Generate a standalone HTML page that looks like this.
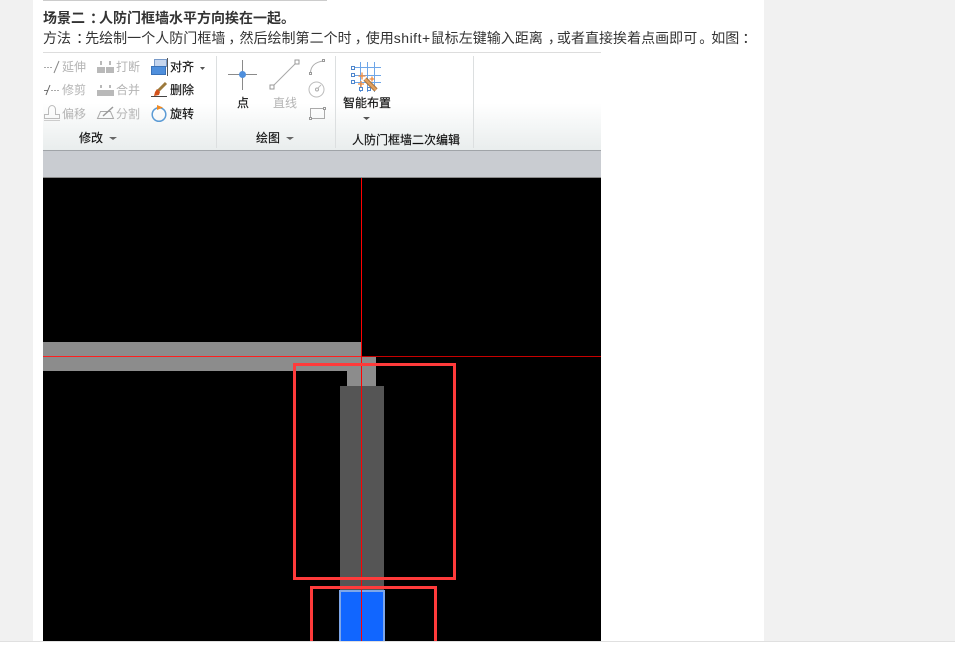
<!DOCTYPE html>
<html lang="zh"><head><meta charset="utf-8"><title>人防门框墙</title>
<style>
html,body{margin:0;padding:0;width:955px;height:650px;overflow:hidden;background:#fff}
body{position:relative;font-family:"Liberation Sans","Noto Sans CJK SC",sans-serif;color:#333}
.a{position:absolute}
.t{position:absolute;white-space:nowrap;font-size:12px;line-height:14px;color:#111;-webkit-text-stroke:.15px currentColor}
.g{color:#b4b4b4;-webkit-text-stroke:0}
.h{-webkit-text-stroke:0}
.p{position:relative;left:5px}
.c{position:relative;left:3px}
.e{position:relative;left:3px}
.q{position:relative;left:2px}
.l{letter-spacing:.5px}
</style></head><body>
<div class="a" style="left:0;top:0;width:33px;height:641px;background:#f1f1f1"></div>
<div class="a" style="left:764px;top:0;width:191px;height:641px;background:#f1f1f1"></div>
<div class="a" style="left:0;top:641px;width:955px;height:1px;background:#e0e0e0"></div>
<div class="a" style="left:43px;top:0;width:284px;height:1px;background:#ccc"></div>
<div class="t h" style="left:43px;top:9px;font-size:14px;line-height:18px;font-weight:bold;color:#333">场景二<span class="p">：</span>人防门框墙水平方向挨在一起。</div>
<div class="t h" style="left:43px;top:29px;font-size:14px;line-height:18px;color:#333;letter-spacing:.03px">方法<span class="p">：</span>先绘制一个人防门框墙<span class="c">，</span>然后绘制第二个时<span class="c">，</span>使用<span class="l">shift+</span>鼠标左键输入距离<span class="p">，</span>或者直接挨着点画即可<span class="q">。</span>如图<span class="e">：</span></div>
<div class="a" style="left:43px;top:52px;width:558px;height:1px;background:#ddd"></div>

<!-- ribbon -->
<div class="a" style="left:43px;top:53px;width:558px;height:97px;background:linear-gradient(#fff 0,#fff 50px,#e9eded 97px)"></div>
<div class="a" style="left:43px;top:150px;width:558px;height:1px;background:#a0a4a8"></div>
<div class="a" style="left:43px;top:151px;width:558px;height:26px;background:#c9ccd1"></div>
<div class="a" style="left:43px;top:177px;width:558px;height:1px;background:#8a8a8a"></div>
<div class="a" style="left:216px;top:56px;width:1px;height:92px;background:#dcdfe0"></div>
<div class="a" style="left:335px;top:56px;width:1px;height:92px;background:#dcdfe0"></div>
<div class="a" style="left:473px;top:56px;width:1px;height:92px;background:#dcdfe0"></div>

<div class="t g" style="left:62px;top:60px">延伸</div>
<div class="t g" style="left:62px;top:83px">修剪</div>
<div class="t g" style="left:62px;top:107px">偏移</div>
<div class="t g" style="left:116px;top:60px">打断</div>
<div class="t g" style="left:116px;top:83px">合并</div>
<div class="t g" style="left:116px;top:107px">分割</div>
<div class="t" style="left:170px;top:60px">对齐</div>
<div class="t" style="left:170px;top:83px">删除</div>
<div class="t" style="left:170px;top:107px">旋转</div>
<div class="t" style="left:79px;top:131px">修改</div>
<div class="t" style="left:237px;top:96px">点</div>
<div class="t g" style="left:273px;top:96px">直线</div>
<div class="t" style="left:256px;top:131px">绘图</div>
<div class="t" style="left:343px;top:96px">智能布置</div>
<div class="t" style="left:352px;top:133px">人防门框墙二次编辑</div>

<svg class="a" style="left:43px;top:53px" width="430" height="97" viewBox="43 53 430 97" fill="none">
 <!-- extend / trim / offset -->
 <path d="M44 67.500h9" stroke="#aaa" stroke-dasharray="2 1"/>
 <path d="M54 73l5-12" stroke="#888"/>
 <path d="M44 90.500h4" stroke="#777"/><path d="M46 95l4-10" stroke="#666"/><path d="M51 90.500h8" stroke="#aaa" stroke-dasharray="2 1"/>
 <path d="M44.500 118.500h15v-4h-4v-5a3.500 4 0 0 0-7 0v5h-4z" stroke="#bbb"/><path d="M44 120.500h16" stroke="#ccc"/>
 <!-- break / join / split -->
 <g fill="#b9b9b9"><rect x="97" y="67" width="8" height="6"/><rect x="106" y="67" width="8" height="6"/><rect x="100" y="61" width="2" height="4"/><rect x="109" y="61" width="2" height="4"/>
 <rect x="97" y="90" width="17" height="6"/><rect x="100" y="85" width="2" height="3"/><rect x="109" y="85" width="2" height="3"/></g>
 <path d="M97.500 118.500l3-7h10l3 7z" stroke="#aaa"/><path d="M103 116l10-9" stroke="#999" stroke-width="1.500"/>
 <!-- align -->
 <rect x="154.500" y="59.500" width="12" height="7" fill="#c6d6ee" stroke="#7a9bc9"/><rect x="151.500" y="66.500" width="14" height="8" fill="#4f8fdc" stroke="#3a72b8"/><path d="M167.500 58v18" stroke="#555"/>
 <path d="M200 67h5l-2.500 3z" fill="#555"/>
 <!-- brush -->
 <path d="M158 91l8-8" stroke="#9c7a3c" stroke-width="3"/><path d="M157 89l3 3-1 3-5 1 1-4z" fill="#d2521c"/><path d="M151 96.500h16" stroke="#444"/>
 <!-- rotate -->
 <circle cx="159" cy="114.500" r="6.800" stroke="#5b9bd5" stroke-width="1.500"/><path d="M157 105l6 2.500-6 2.500z" fill="#f08a24"/>
 <path d="M109 137h8l-4 3z" fill="#666"/><path d="M286 137h8l-4 3z" fill="#666"/>
 <!-- point -->
 <path d="M228 74.500h12M245 74.500h12M242.500 60v12M242.500 77v13" stroke="#8a8a8a"/><circle cx="242.500" cy="74.500" r="3.500" fill="#4f8fdc"/>
 <!-- line -->
 <path d="M272 87l25-25" stroke="#a8a8a8"/><rect x="270" y="85" width="4" height="4" fill="#fff" stroke="#999"/><rect x="295" y="60" width="4" height="4" fill="#fff" stroke="#999"/>
 <!-- arc/circle/rect -->
 <path d="M310.500 73c0-7 5-11 13-12" stroke="#aaa"/><rect x="309.500" y="72.500" width="2" height="2" fill="#fff" stroke="#999"/><rect x="322.500" y="59.500" width="2" height="2" fill="#fff" stroke="#999"/>
 <circle cx="316.500" cy="89.500" r="7.500" stroke="#bbb"/><circle cx="317" cy="89.500" r="1.500" stroke="#aaa"/><path d="M318 88l3-3" stroke="#bbb"/>
 <rect x="310.500" y="108.500" width="14" height="10" stroke="#aaa"/><rect x="309.500" y="117.500" width="2" height="2" fill="#fff" stroke="#999"/><rect x="323.500" y="107.500" width="2" height="2" fill="#fff" stroke="#999"/>
 <path d="M363 117h7l-3.500 3z" fill="#555"/>
 <!-- smart layout -->
 <path d="M352 67.500h29M352 75.500h29M352 82.500h29M360.500 62v30M367.500 62v30M374.500 62v30" stroke="#6ea6e8"/>
 <g fill="#fff" stroke="#4f86cc"><rect x="351.500" y="66.500" width="3" height="3"/><rect x="351.500" y="73.500" width="3" height="3"/><rect x="351.500" y="80.500" width="3" height="3"/><rect x="359.500" y="87.500" width="3" height="3"/><rect x="367.500" y="87.500" width="3" height="3"/></g>
 <path d="M365 79l11 11" stroke="#a8743c" stroke-width="4.500"/><path d="M365 79l11 11" stroke="#e0a060" stroke-width="2.500"/><path d="M362 76l3 3" stroke="#fff" stroke-width="2.500"/>
 <path d="M358.500 76h7M362 72.500v7M358 84h6M361 81v6M369.500 79h5M372 76.500v5" stroke="#f08a3c" stroke-width="1.300"/>
</svg>

<!-- CAD canvas -->
<div class="a" style="left:43px;top:178px;width:558px;height:463px;background:#000;overflow:hidden"></div>
<svg class="a" style="left:43px;top:178px" width="558" height="463" viewBox="43 178 558 463" shape-rendering="crispEdges">
 <rect x="43" y="342" width="318" height="29" fill="#8c8c8c"/>
 <rect x="347" y="357" width="29" height="29" fill="#8c8c8c"/>
 <rect x="340" y="386" width="44" height="204" fill="#555"/>
 <rect x="339" y="590" width="46" height="51" fill="#7ea6e8"/>
 <rect x="341" y="592" width="42" height="49" fill="#1166ff"/>
 <rect x="43" y="356" width="318" height="1" fill="#ff1f1f"/>
 <rect x="361" y="356" width="240" height="1" fill="#c80000"/>
 <rect x="361" y="178" width="1" height="463" fill="#ff0000"/>
 <rect x="294.500" y="364.500" width="160" height="214" fill="none" stroke="#ff3b3b" stroke-width="3"/>
 <rect x="311.500" y="587.500" width="124" height="60" fill="none" stroke="#ff3b3b" stroke-width="3"/>
</svg>
</body></html>
